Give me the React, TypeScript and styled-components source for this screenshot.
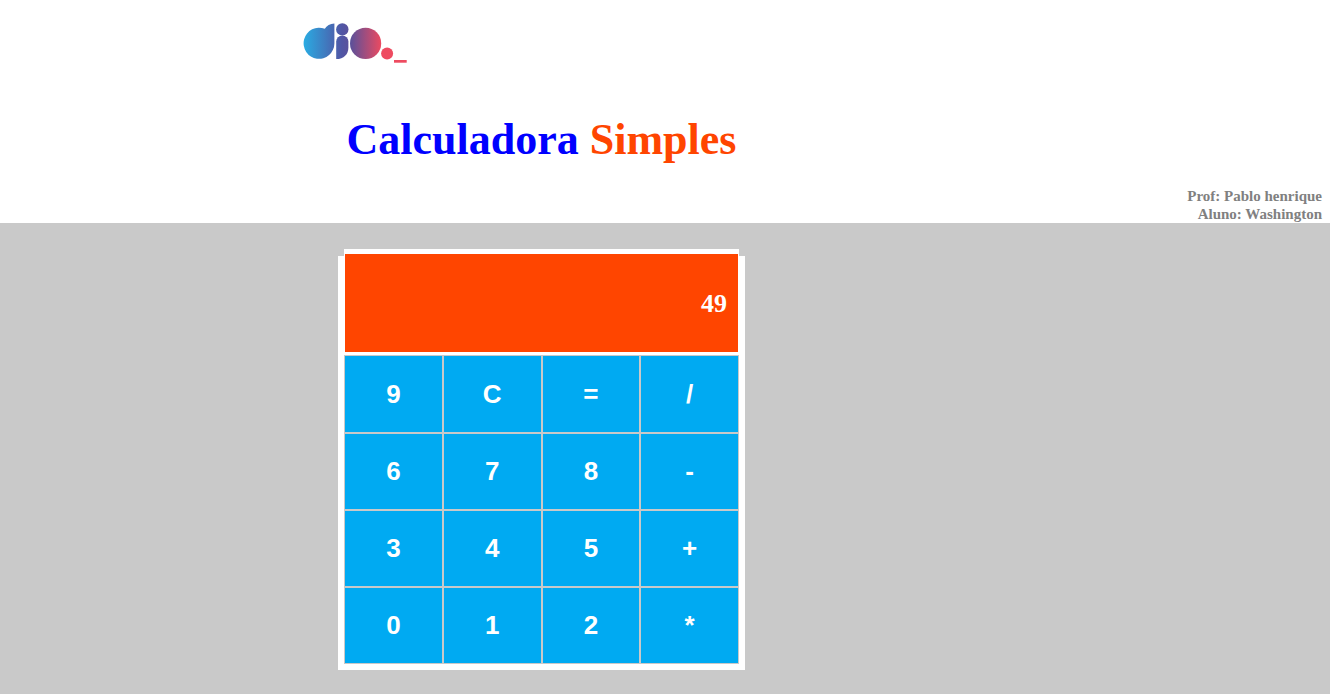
import React, { useState } from "react";
import styled, { createGlobalStyle } from "styled-components";

const GlobalStyle = createGlobalStyle`
  *, *::before, *::after { box-sizing: border-box; }
  body {
    margin: 0;
    background: #c9c9c9;
    font-family: "Liberation Serif", "Times New Roman", serif;
  }
`;

const Header = styled.header`
  background: #fff;
  padding-top: 20px;
`;

const Logo = styled.svg`
  display: block;
  width: 110px;
  height: 44px;
  margin-left: 300px;
`;

const Column = styled.div`
  width: 407px;
  max-width: 100%;
  margin-left: 338px;
`;

const Title = styled.h1`
  margin: 50px 0 22px;
  color: #0000ff;
  font-size: 44px;
  line-height: 51px;
  text-align: center;
  white-space: nowrap;
`;

const Accent = styled.span`
  color: #ff4500;
`;

const Credits = styled.div`
  padding-right: 8px;
  color: #808080;
  font-size: 15px;
  font-weight: bold;
  line-height: 18px;
  text-align: right;
`;

const Credit = styled.p`
  margin: 0;
`;

const Main = styled.main`
  padding: 33px 0 24px;
`;

const Panel = styled.section`
  display: flex;
  flex-direction: column;
  padding: 0 6px 6px;
  background: #fff;
`;

const Display = styled.output`
  display: flex;
  align-items: center;
  justify-content: flex-end;
  height: 106px;
  margin-top: -7px;
  padding: 2px 11px 0 0;
  border: solid #fff;
  border-width: 5px 1px 3px;
  background: #ff4500;
  color: #fff;
  font-size: 26px;
  font-weight: bold;
`;

const Keys = styled.div`
  display: grid;
  grid-template-columns: repeat(4, 1fr);
  grid-template-rows: 78px repeat(3, 77px);
`;

const Key = styled.button`
  padding: 0;
  border: 1px solid #c9c9c9;
  background: #00aaf2;
  color: #fff;
  font-family: "Liberation Sans", Arial, sans-serif;
  font-size: 26px;
  font-weight: bold;
  cursor: pointer;
`;

const keys = ["9", "C", "=", "/", "6", "7", "8", "-", "3", "4", "5", "+", "0", "1", "2", "*"];

function calculate(expression: string): string {
  const tokens = expression.match(/\d+(?:\.\d+)?|[-+*/]/g) ?? [];
  const terms: number[] = [];
  let operator = "+";
  for (const token of tokens) {
    if (/^[-+*/]$/.test(token)) {
      operator = token;
      continue;
    }
    const value = Number(token);
    if (operator === "+") terms.push(value);
    else if (operator === "-") terms.push(-value);
    else if (operator === "*") terms.push((terms.pop() ?? 0) * value);
    else terms.push((terms.pop() ?? 0) / value);
  }
  return String(terms.reduce((sum, term) => sum + term, 0));
}

export default function App() {
  const [value, setValue] = useState("49");

  const press = (key: string) => {
    if (key === "C") setValue("");
    else if (key === "=") setValue(calculate(value));
    else setValue(value + key);
  };

  return (
    <>
      <GlobalStyle />
      <Header>
        <Logo viewBox="0 0 110 44" role="img" aria-label="dio">
          <defs>
            <linearGradient id="dio" gradientUnits="userSpaceOnUse" x1="4" y1="0" x2="82" y2="0">
              <stop offset="0" stopColor="#2aabe2" />
              <stop offset="0.48" stopColor="#5056a5" />
              <stop offset="0.6" stopColor="#5c5099" />
              <stop offset="1" stopColor="#ef4a5f" />
            </linearGradient>
          </defs>
          <g fill="url(#dio)">
            <path d="M34.4 3.4V23.4A15.4 15.6 0 1 1 24.8 8.8C26.6 5.6 30 3.5 34.4 3.4Z" />
            <circle cx="42.3" cy="9.4" r="6.2" />
            <path d="M36.2 39V21.6A6.1 6.1 0 0 1 48.4 21.6V27.4C48.4 34.2 43.8 39 36.2 39Z" />
            <circle cx="65.6" cy="23.4" r="15.6" />
          </g>
          <g fill="#ee4b60">
            <circle cx="87.1" cy="33.6" r="6" />
            <rect x="94" y="40" width="12.7" height="2.7" />
          </g>
        </Logo>
        <Column>
          <Title>
            Calculadora <Accent>Simples</Accent>
          </Title>
        </Column>
        <Credits>
          <Credit>Prof: Pablo henrique</Credit>
          <Credit>Aluno: Washington</Credit>
        </Credits>
      </Header>
      <Main>
        <Column>
          <Panel aria-label="Calculadora">
            <Display>{value}</Display>
            <Keys>
              {keys.map((key) => (
                <Key key={key} type="button" onClick={() => press(key)}>
                  {key}
                </Key>
              ))}
            </Keys>
          </Panel>
        </Column>
      </Main>
    </>
  );
}
